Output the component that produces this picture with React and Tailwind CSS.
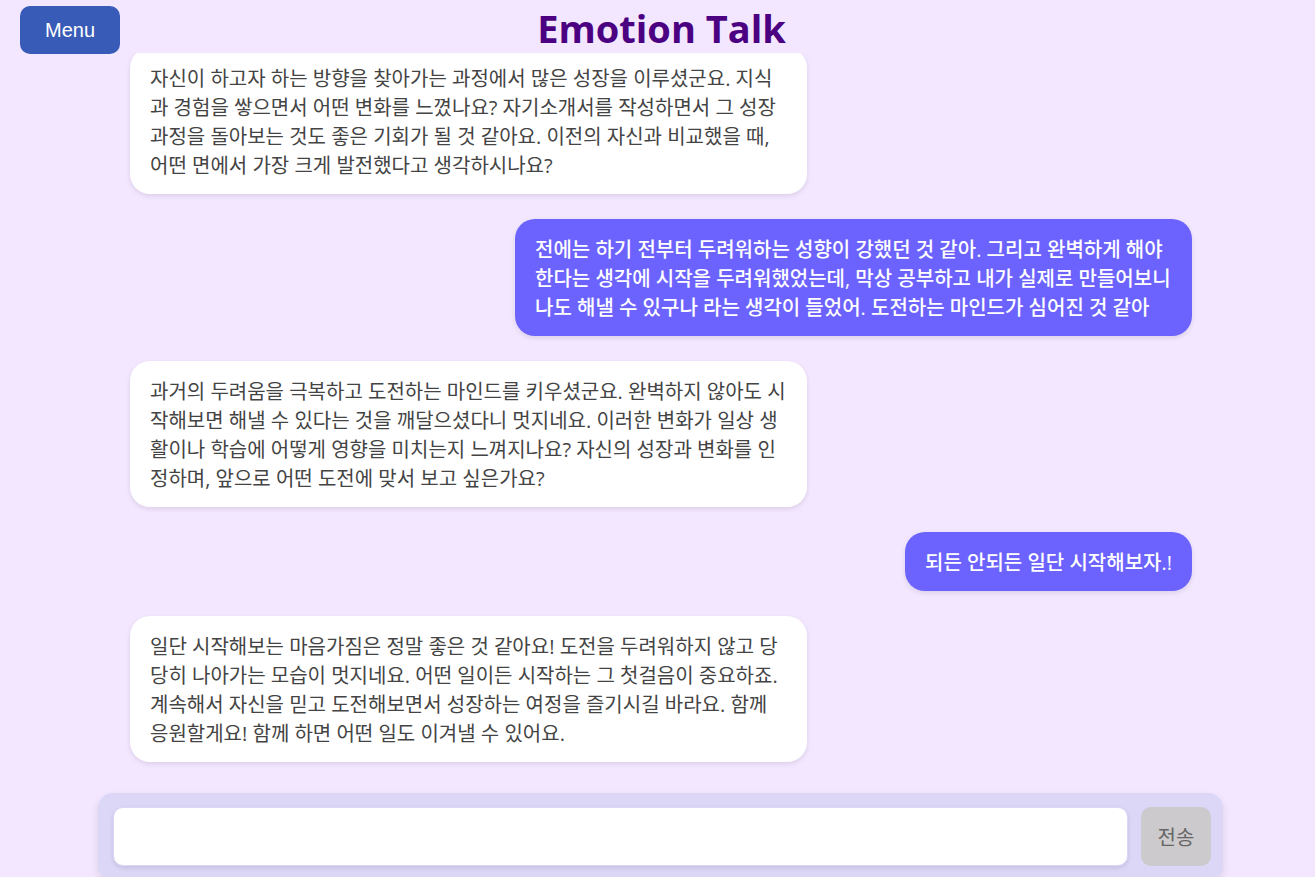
import { useState } from "react";

const messages = [
  {
    from: "bot",
    text: "자신이 하고자 하는 방향을 찾아가는 과정에서 많은 성장을 이루셨군요. 지식과 경험을 쌓으면서 어떤 변화를 느꼈나요? 자기소개서를 작성하면서 그 성장 과정을 돌아보는 것도 좋은 기회가 될 것 같아요. 이전의 자신과 비교했을 때, 어떤 면에서 가장 크게 발전했다고 생각하시나요?",
  },
  {
    from: "user",
    text: "전에는 하기 전부터 두려워하는 성향이 강했던 것 같아. 그리고 완벽하게 해야 한다는 생각에 시작을 두려워했었는데, 막상 공부하고 내가 실제로 만들어보니 나도 해낼 수 있구나 라는 생각이 들었어. 도전하는 마인드가 심어진 것 같아",
  },
  {
    from: "bot",
    text: "과거의 두려움을 극복하고 도전하는 마인드를 키우셨군요. 완벽하지 않아도 시작해보면 해낼 수 있다는 것을 깨달으셨다니 멋지네요. 이러한 변화가 일상 생활이나 학습에 어떻게 영향을 미치는지 느껴지나요? 자신의 성장과 변화를 인정하며, 앞으로 어떤 도전에 맞서 보고 싶은가요?",
  },
  { from: "user", text: "되든 안되든 일단 시작해보자.!" },
  {
    from: "bot",
    text: "일단 시작해보는 마음가짐은 정말 좋은 것 같아요! 도전을 두려워하지 않고 당당히 나아가는 모습이 멋지네요. 어떤 일이든 시작하는 그 첫걸음이 중요하죠. 계속해서 자신을 믿고 도전해보면서 성장하는 여정을 즐기시길 바라요. 함께 응원할게요! 함께 하면 어떤 일도 이겨낼 수 있어요.",
  },
];

const bubble = {
  bot: "self-start bg-white text-[#444444]",
  user: "self-end bg-[#6c63ff] font-medium text-white",
};

function Message({ from, text }) {
  return (
    <li
      className={`max-w-[677px] rounded-[20px] px-5 pb-[14px] pt-4 shadow-[0_2px_5px_rgba(0,0,0,0.1)] ${bubble[from]}`}
    >
      {text}
    </li>
  );
}

export default function App() {
  const [draft, setDraft] = useState("");

  return (
    <div className="flex h-screen flex-col overflow-hidden bg-[#f3e7ff] font-['Open_Sans','Noto_Sans_CJK_KR',sans-serif] text-[20px] leading-[29px]">
      <header className="grid h-[53px] shrink-0 grid-cols-[1fr_auto_1fr] items-start pl-5 pr-3">
        <button
          type="button"
          className="mt-[6px] h-12 w-[100px] justify-self-start rounded-[10px] bg-[#385bb7] font-['Liberation_Sans',sans-serif] text-white"
        >
          Menu
        </button>
        <h1 className="font-['Open_Sans',sans-serif] text-[38px] font-bold leading-[56px] text-[#4b0082]">
          Emotion Talk
        </h1>
      </header>

      <main className="flex min-h-0 flex-1 flex-col-reverse overflow-y-auto pl-[130px] pr-[123px] [scrollbar-width:none]">
        <ul className="flex flex-col gap-[25px] pb-[31px]">
          {messages.map((message, index) => (
            <Message key={index} {...message} />
          ))}
        </ul>
      </main>

      <form
        onSubmit={(event) => event.preventDefault()}
        className="-mb-[3px] ml-[98px] mr-[92px] flex shrink-0 gap-[13px] rounded-[15px] bg-[#dcd6f7] py-[14px] pl-[15px] pr-3 shadow-[0_4px_8px_rgba(0,0,0,0.1)]"
      >
        <input
          type="text"
          aria-label="메시지"
          value={draft}
          onChange={(event) => setDraft(event.target.value)}
          className="h-[59px] min-w-0 flex-1 rounded-[10px] border border-[#dcd6f7] bg-white px-4 shadow-[0_2px_5px_rgba(0,0,0,0.1)] outline-none"
        />
        <button
          type="submit"
          disabled={!draft}
          className="h-[59px] w-[70px] rounded-[10px] bg-[#cccacc] pt-[2px] text-[#666666]"
        >
          전송
        </button>
      </form>
    </div>
  );
}
